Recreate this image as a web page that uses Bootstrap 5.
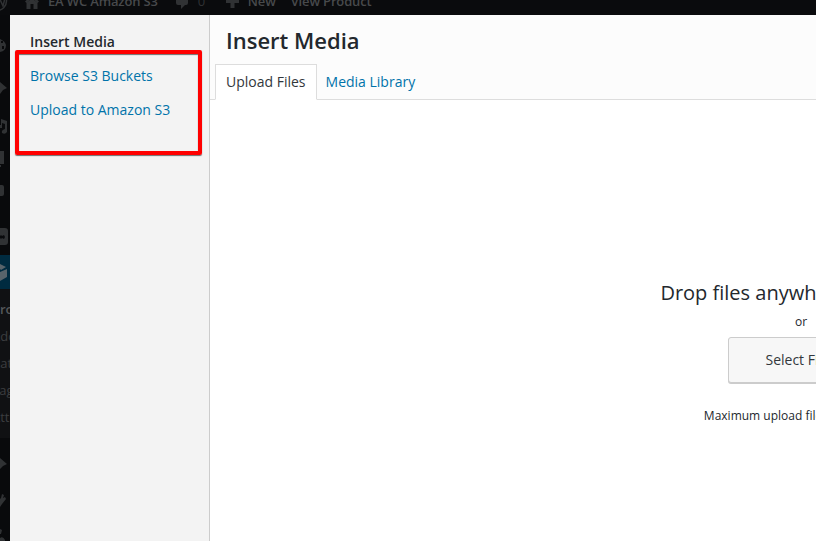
<!DOCTYPE html>
<html lang="en">
<head>
<meta charset="utf-8">
<meta name="viewport" content="width=device-width, initial-scale=1">
<title>Insert Media</title>
<link href="https://cdn.jsdelivr.net/npm/bootstrap@5.3.0/dist/css/bootstrap.min.css" rel="stylesheet">
<style>
body{font-family:"Open Sans",sans-serif;font-size:14px;line-height:18px;color:#23282d;background:#08090b;height:541px}
a{color:#0073aa;text-decoration:none}
.adminbar{height:15px;background:#0a0b0d;color:#47494b;font-size:13px;font-weight:600;line-height:18px}
.adminbar .bar-line{height:18px;margin-top:-8px;white-space:nowrap;letter-spacing:-.15px}
.adminbar svg,.rail svg{display:block;flex:none}
.bar-count{font-weight:400;color:#303234;width:9px}
.bar-plus{margin-left:17px}
.bar-view{margin-left:15px}
.rail{width:10px;background:#090a0c;color:#3c3e40;font-size:13px}
.rail-active{height:34px;background:#002b40}
.rail-sub{height:149px;background:#101113;padding-top:7px}
.rail-sub span{display:block;height:27px;line-height:27px;margin-left:-8px;white-space:nowrap}
.rail-sub .current{font-weight:600;color:#55585a}
.modal-menu{width:200px;background:#f3f3f3;border-right:1px solid #ccc;padding:17px 0 0 20px}
.modal-menu h2{font-size:14px;line-height:20px;font-weight:600;margin:0}
.callout{width:187px;height:105px;margin:-2px 0 0 -15px;border:4px solid #f00;border-radius:2px;padding:13px 0 0 11px;gap:16px;box-shadow:0 1px 1px rgba(0,0,0,.55),inset 0 1px 1px rgba(0,0,0,.55)}
.frame-head{height:85px;background:#fcfcfc}
.frame-head h1{font-size:22px;line-height:50px;height:49px;padding:0 16px;font-weight:600;margin:0}
.frame-tabs{--bs-nav-tabs-border-color:#ddd;--bs-nav-tabs-border-radius:0;height:36px;padding-left:5px;flex-wrap:nowrap}
.frame-tabs .nav-link{font-size:14px;line-height:18px;padding:8px 10px;height:36px;color:#0073aa}
.frame-tabs .nav-item + .nav-item .nav-link{padding-left:8px}
.frame-tabs .nav-link.active{color:#32373c;background:#fff;border-color:#ddd #ddd #fff}
.uploader{width:1182px;padding-top:179px}
.uploader h2{font-size:20px;line-height:28px;font-weight:400;margin:0}
.uploader p{font-size:12px;line-height:18px;margin:0}
.uploader .or-line{margin-top:6px}
.btn-select{width:146px;height:46px;margin:6px 0 24px;font-size:14px;color:#32373c;background:#f7f7f7;border:1px solid #ccc;border-radius:3px;box-shadow:0 1px 0 #ccc;padding:0 0 2px}
</style>
</head>
<body class="overflow-hidden d-flex flex-column">
<header class="adminbar overflow-hidden flex-shrink-0">
  <div class="bar-line d-flex">
    <svg width="24" height="21" viewBox="0 0 24 21" fill="none" stroke="#303234" stroke-width="1.5"><circle cx="-3" cy="9" r="9.5"/><path d="M-2 3l5 11 2-8"/></svg>
    <svg width="24" height="21" viewBox="0 0 24 21" fill="#303234"><path d="M1 9.500L8 3l7 6.500-1.500 1.500L8 6l-5.500 5z"/><path fill-rule="evenodd" d="M2.500 10.500L8 6.500l5.500 4V17h-11zM6.500 12v5h3v-5z"/></svg>
    <span>EA WC Amazon S3</span>
    <svg width="24" height="21" viewBox="0 0 24 21" fill="#303234" class="ms-3"><path d="M3 3h9q2 0 2 2v6q0 2-2 2h-1l-4 4v-4H4q-2 0-2-2V5z"/></svg>
    <span class="bar-count">0</span>
    <svg width="24" height="21" viewBox="0 0 24 21" fill="#303234" class="bar-plus"><path d="M6.500 3h4v5h4.500v3h-4.500v5h-4v-5H2V8h4.500z"/></svg>
    <span>New</span>
    <span class="bar-view">View Product</span>
  </div>
</header>
<div class="d-flex flex-grow-1 overflow-hidden">
  <nav class="rail overflow-hidden flex-shrink-0">
    <svg width="10" height="240" viewBox="0 15 10 240" fill="#303234">
      <path fill-rule="evenodd" d="M0 39q5 2 6 6 0 6-6 7zM1 41v2h2v-2zM2 46v3h2v-3z"/>
      <path d="M0 82l7 6-4 2-3 4z"/>
      <path d="M1 119l6 2v11q-2 3-5 1-1-3 3-4v-5l-3-1v5H0v-3h1z"/>
      <path d="M0 151h4v13H0zM0 165h1v2H0z"/>
      <path d="M0 185h2q2 0 2 2v7q0 2-2 2H0z"/>
      <path d="M0 228h5q3 0 3 3v11q0 3-3 3H0z"/>
      <path d="M0 236l1-1 1 1 2-1 1 2-1 2-2-1-1 1-1-1z" fill="#090a0c"/>
    </svg>
    <div class="rail-active"><svg width="10" height="34" viewBox="0 0 10 34" fill="#59646b"><path d="M0 9l6 3-5 3-1-1zM7 14v8l-7 4v-9z"/></svg></div>
    <div class="rail-sub"><span class="current">Products</span><span>Add Product</span><span>Categories</span><span>Tags</span><span>Attributes</span></div>
    <svg width="10" height="103" viewBox="0 438 10 103" fill="#303234"><path d="M0 458l7 6-4 2-3 3z"/><path d="M2 494l-1 4-1 1v8l2-3 4-5-1-2-2 1 1-3z"/><path d="M0 529l2 1-1 4H0zM0 538q3-2 5 2v1H0z"/></svg>
  </nav>
  <aside class="modal-menu flex-shrink-0">
    <h2>Insert Media</h2>
    <div class="callout d-flex flex-column"><a href="#">Browse S3 Buckets</a><a href="#">Upload to Amazon S3</a></div>
  </aside>
  <main class="flex-grow-1 overflow-hidden bg-white">
    <div class="frame-head">
      <h1>Insert Media</h1>
      <ul class="nav nav-tabs frame-tabs">
        <li class="nav-item"><a class="nav-link active" href="#">Upload Files</a></li>
        <li class="nav-item"><a class="nav-link" href="#">Media Library</a></li>
      </ul>
    </div>
    <section class="uploader d-flex flex-column align-items-center">
      <h2>Drop files anywhere to upload</h2>
      <p class="or-line">or</p>
      <button type="button" class="btn btn-select">Select Files</button>
      <p>Maximum upload file size: 128 MB.</p>
    </section>
  </main>
</div>
<script src="https://cdn.jsdelivr.net/npm/bootstrap@5.3.0/dist/js/bootstrap.bundle.min.js"></script>
</body>
</html>
